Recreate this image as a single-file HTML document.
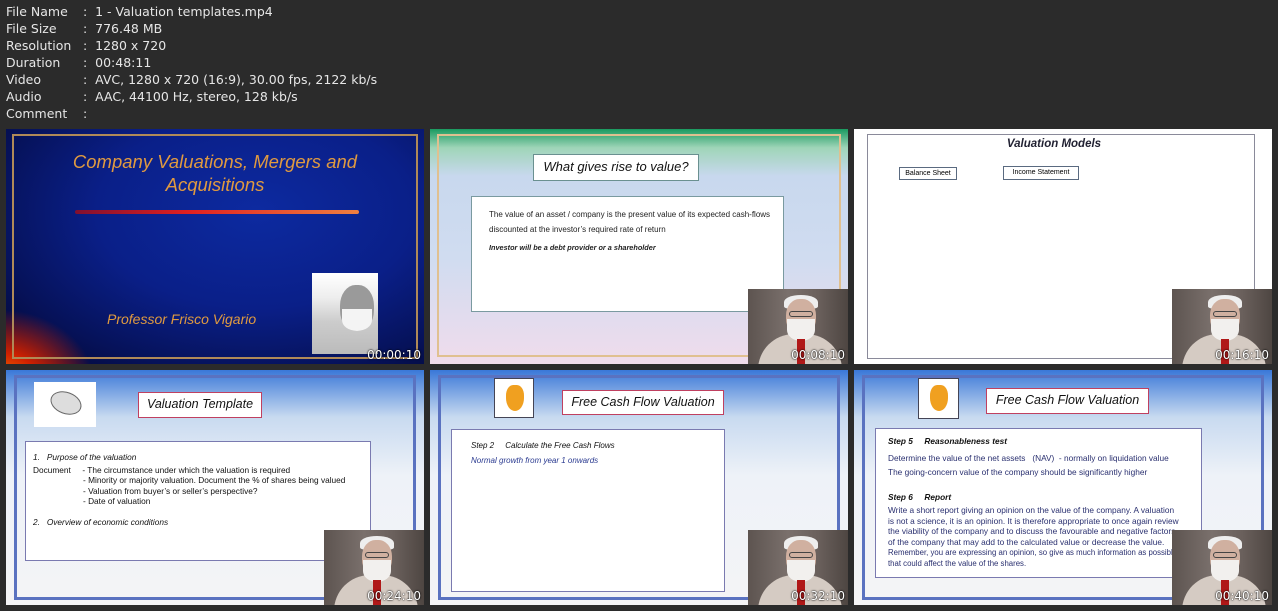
<!DOCTYPE html>
<html><head><meta charset="utf-8"><style>
*{margin:0;padding:0;box-sizing:border-box}
body{width:1278px;height:611px;background:#2b2b2b;position:relative;overflow:hidden;font-family:"DejaVu Sans","Liberation Sans",sans-serif}
.info{position:absolute;left:6px;top:3px;color:#e6e6e6;font-size:12.5px;line-height:17px}
.info div{white-space:pre}
.info span{display:inline-block;width:73px}
.t{position:absolute;width:418px;height:235px;overflow:hidden}
.a{position:absolute}
.ts{position:absolute;right:3px;bottom:2px;color:#fff;font-size:12px;font-family:"DejaVu Sans",sans-serif;text-shadow:0 0 2px #000,0 0 1px #000}
.s{font-family:"Liberation Sans",Arial,sans-serif}
.cam{position:absolute;right:0;bottom:0;width:100px;height:75px;background:linear-gradient(90deg,#5d5450,#7a706c 40%,#6a605c 70%,#4e4642);overflow:hidden}
.cam .body{position:absolute;left:10px;bottom:-6px;width:84px;height:36px;border-radius:40px 40px 0 0;background:#d5cbc3}
.cam .head{position:absolute;left:38px;top:10px;width:30px;height:36px;border-radius:45%;background:#d0b0a0}
.cam .hair{position:absolute;left:36px;top:6px;width:34px;height:14px;border-radius:50% 50% 20% 20%;background:#eee}
.cam .beard{position:absolute;left:39px;top:30px;width:28px;height:22px;border-radius:0 0 50% 50%;background:#f2f0ee}
.cam .tie{position:absolute;left:49px;top:50px;width:8px;height:26px;background:#b01818}
.cam .gl{position:absolute;left:41px;top:22px;width:24px;height:6px;border:1px solid #444;border-radius:3px}
.fr{position:absolute;border:3px solid #5a6fb8}
.box{position:absolute;background:#fff}
</style></head><body>
<div class="info">
<div><span>File Name</span> :  1 - Valuation templates.mp4</div>
<div><span>File Size</span> :  776.48 MB</div>
<div><span>Resolution</span> :  1280 x 720</div>
<div><span>Duration</span> :  00:48:11</div>
<div><span>Video</span> :  AVC, 1280 x 720 (16:9), 30.00 fps, 2122 kb/s</div>
<div><span>Audio</span> :  AAC, 44100 Hz, stereo, 128 kb/s</div>
<div><span>Comment</span> :</div>
</div>

<!-- T1 -->
<div class="t" style="left:6px;top:129px;background:radial-gradient(ellipse at 60% 35%,#0d2aa0 0%,#0a1f88 45%,#06125a 75%,#020630 100%)">
 <div class="a" style="left:-30px;top:180px;width:120px;height:90px;background:radial-gradient(ellipse at 20% 85%,#ff8a00 0%,#d02000 30%,rgba(80,0,40,0) 70%)"></div>
 <div class="a" style="left:6px;top:5px;width:406px;height:225px;border:2px solid #b08a58"></div>
 <div class="a s" style="left:0;width:418px;top:21px;text-align:center;color:#e09a40;font-style:italic;font-size:18.5px;line-height:23px">Company Valuations, Mergers and<br>Acquisitions</div>
 <div class="a" style="left:69px;top:81px;width:284px;height:4px;border-radius:2px;background:linear-gradient(90deg,#801030,#e02020 40%,#f08040)"></div>
 <div class="a s" style="left:101px;top:182px;color:#e09a40;font-style:italic;font-size:14px">Professor Frisco Vigario</div>
 <div class="a" style="left:306px;top:144px;width:66px;height:81px;background:linear-gradient(180deg,#fff 0%,#eee 30%,#ccc 60%,#bbb)">
  <div class="a" style="left:28px;top:12px;width:34px;height:46px;border-radius:45%;background:#9a9a9a"></div>
  <div class="a" style="left:30px;top:36px;width:30px;height:22px;border-radius:0 0 50% 50%;background:#f4f4f4"></div>
 </div>
 <div class="ts">00:00:10</div>
</div>

<!-- T2 -->
<div class="t" style="left:430px;top:129px;background:linear-gradient(180deg,#1a9a60 0%,#9fd5b8 8%,#c8d8ee 20%,#d0dcf0 55%,#f0dcec 100%)">
 <div class="a" style="left:7px;top:5px;width:404px;height:223px;border:2px solid #e0c090"></div>
 <div class="a box s" style="left:103px;top:25px;width:166px;height:27px;border:1.5px solid #6a9090;text-align:center;font-style:italic;font-size:13px;line-height:24px;color:#111">What gives rise to value?</div>
 <div class="a box s" style="left:41px;top:67px;width:313px;height:116px;border:1.5px solid #7a9aa0;font-size:8px;color:#222;padding:11px 0 0 17px;line-height:14.5px">The value of an asset / company is the present value of its expected cash-flows<br>discounted at the investor’s required rate of return<div style="font-style:italic;font-weight:bold;margin-top:6px;line-height:10px;font-size:7.3px">Investor will be a debt provider or a shareholder</div></div>
 <div class="cam"><div class="body"></div><div class="hair"></div><div class="head"></div><div class="gl"></div><div class="beard"></div><div class="tie"></div></div>
 <div class="ts">00:08:10</div>
</div>

<!-- T3 -->
<div class="t" style="left:854px;top:129px;background:#fff">
 <div class="a" style="left:13px;top:5px;width:388px;height:225px;border:1.5px solid #8a8a9a"></div>
 <div class="a s" style="left:0;width:400px;top:9px;text-align:center;font-style:italic;font-weight:bold;font-size:11.5px;color:#223">Valuation Models</div>
 <div class="a s" style="left:45px;top:38px;width:58px;height:13px;border:1px solid #5a6a80;font-size:7px;text-align:center;line-height:11px;color:#000">Balance Sheet</div>
 <div class="a s" style="left:149px;top:37px;width:76px;height:14px;border:1px solid #5a6a80;font-size:7px;text-align:center;line-height:12px;color:#000">Income Statement</div>
 <div class="cam"><div class="body"></div><div class="hair"></div><div class="head"></div><div class="gl"></div><div class="beard"></div><div class="tie"></div></div>
 <div class="ts">00:16:10</div>
</div>

<!-- T4 -->
<div class="t" style="left:6px;top:370px;background:linear-gradient(180deg,#3a78d8 0%,#c8daf0 20%,#eef2f8 45%,#f4f4f6 100%)">
 <div class="fr" style="left:8px;top:5px;width:402px;height:225px;border-color:#5a72c0"></div>
 <div class="a" style="left:28px;top:12px;width:62px;height:45px;background:#fff">
  <div class="a" style="left:16px;top:10px;width:32px;height:22px;border-radius:50%;background:#ddd;border:1px solid #666;transform:rotate(20deg)"></div>
 </div>
 <div class="a box s" style="left:132px;top:22px;width:124px;height:26px;border:1.5px solid #c04060;text-align:center;font-style:italic;font-size:12.5px;line-height:23px;color:#111">Valuation Template</div>
 <div class="a box s" style="left:19px;top:71px;width:346px;height:120px;border:1.5px solid #7a7ab0;font-size:8.3px;color:#111;padding:10px 0 0 7px;line-height:10.5px">
  <div style="font-style:italic">1.&nbsp;&nbsp;&nbsp;Purpose of the valuation</div>
  <div style="margin-top:2px">Document&nbsp;&nbsp;&nbsp;&nbsp;&nbsp;- The circumstance under which the valuation is required</div>
  <div style="padding-left:50px">- Minority or majority valuation. Document the % of shares being valued</div>
  <div style="padding-left:50px">- Valuation from buyer’s or seller’s perspective?</div>
  <div style="padding-left:50px">- Date of valuation</div>
  <div style="font-style:italic;margin-top:10px">2.&nbsp;&nbsp;&nbsp;Overview of economic conditions</div>
 </div>
 <div class="cam"><div class="body"></div><div class="hair"></div><div class="head"></div><div class="gl"></div><div class="beard"></div><div class="tie"></div></div>
 <div class="ts">00:24:10</div>
</div>

<!-- T5 -->
<div class="t" style="left:430px;top:370px;background:linear-gradient(180deg,#3a78d8 0%,#c8daf0 20%,#eef2f8 45%,#f4f4f6 100%)">
 <div class="fr" style="left:8px;top:5px;width:402px;height:225px;border-color:#5a72c0"></div>
 <div class="a" style="left:64px;top:8px;width:40px;height:40px;background:#fff;border:1px solid #445">
  <div class="a" style="left:11px;top:6px;width:18px;height:26px;border-radius:40% 40% 50% 50%;background:#f0a020"></div>
 </div>
 <div class="a box s" style="left:132px;top:20px;width:162px;height:25px;border:1.5px solid #c04060;text-align:center;font-style:italic;font-size:12.5px;line-height:22px;color:#111">Free Cash Flow Valuation</div>
 <div class="a box s" style="left:21px;top:59px;width:274px;height:163px;border:1.5px solid #7a7ab0;font-size:8px;padding:8px 0 0 19px;line-height:15px">
  <div style="font-style:italic;color:#111">Step 2&nbsp;&nbsp;&nbsp;&nbsp;&nbsp;Calculate the Free Cash Flows</div>
  <div style="font-style:italic;color:#2a3a90">Normal growth from year 1 onwards</div>
 </div>
 <div class="cam"><div class="body"></div><div class="hair"></div><div class="head"></div><div class="gl"></div><div class="beard"></div><div class="tie"></div></div>
 <div class="ts">00:32:10</div>
</div>

<!-- T6 -->
<div class="t" style="left:854px;top:370px;background:linear-gradient(180deg,#3a78d8 0%,#c8daf0 20%,#eef2f8 45%,#f4f4f6 100%)">
 <div class="fr" style="left:8px;top:5px;width:402px;height:225px;border-color:#5a72c0"></div>
 <div class="a" style="left:64px;top:8px;width:41px;height:41px;background:#fff;border:1px solid #445">
  <div class="a" style="left:11px;top:6px;width:18px;height:26px;border-radius:40% 40% 50% 50%;background:#f0a020"></div>
 </div>
 <div class="a box s" style="left:132px;top:18px;width:163px;height:26px;border:1.5px solid #c04060;text-align:center;font-style:italic;font-size:12.5px;line-height:23px;color:#111">Free Cash Flow Valuation</div>
 <div class="a box s" style="left:21px;top:58px;width:327px;height:150px;border:1.5px solid #7a7ab0;font-size:8.3px;padding:7px 0 0 12px;line-height:10px;color:#2a3070;white-space:nowrap">
  <div style="font-style:italic;font-weight:bold;color:#111">Step 5&nbsp;&nbsp;&nbsp;&nbsp;&nbsp;Reasonableness test</div>
  <div style="margin-top:7px">Determine the value of the net assets&nbsp;&nbsp;&nbsp;(NAV)&nbsp;&nbsp;- normally on liquidation value</div>
  <div style="margin-top:4px">The going-concern value of the company should be significantly higher</div>
  <div style="font-style:italic;font-weight:bold;color:#111;margin-top:15px">Step 6&nbsp;&nbsp;&nbsp;&nbsp;&nbsp;Report</div>
  <div style="margin-top:3px;line-height:10.5px">Write a short report giving an opinion on the value of the company. A valuation<br>is not a science, it is an opinion. It is therefore appropriate to once again review<br>the viability of the company and to discuss the favourable and negative factors<br>of the company that may add to the calculated value or decrease the value.<br><span style="font-size:7.8px;line-height:9.5px">Remember, you are expressing an opinion, so give as much information as possible<br>that could affect the value of the shares.</span></div>
 </div>
 <div class="cam"><div class="body"></div><div class="hair"></div><div class="head"></div><div class="gl"></div><div class="beard"></div><div class="tie"></div></div>
 <div class="ts">00:40:10</div>
</div>
</body></html>
